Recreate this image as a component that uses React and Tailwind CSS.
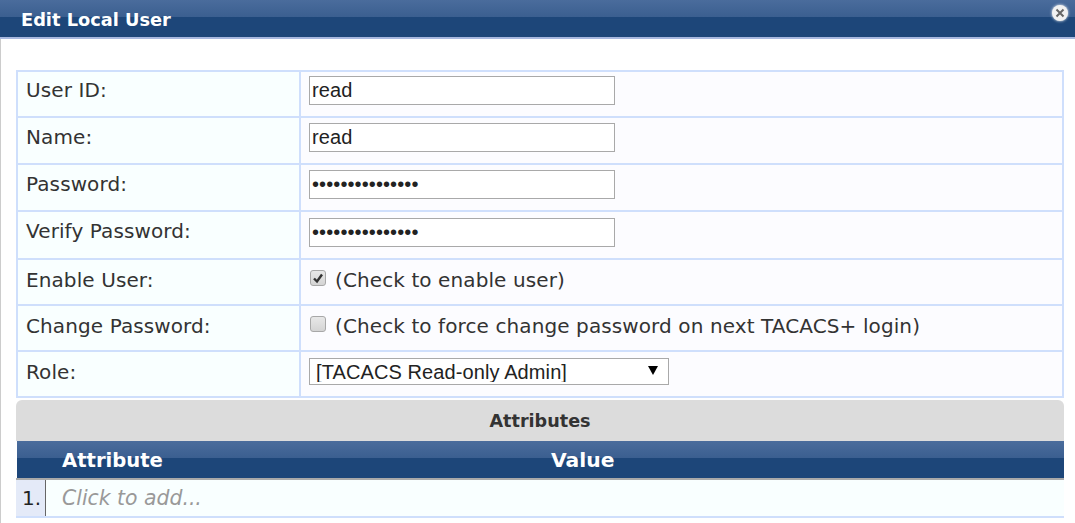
import React from "react";

const FONT = "font-['DejaVu_Sans','Liberation_Sans',sans-serif]";
const BAR = "bg-[linear-gradient(to_bottom,#4a6c9c_0%,#3b5f90_45%,#1d4679_46%,#1d4679_100%)]";
const INPUT = "w-[306px] h-[29px] border border-[#a9a9a9] bg-white pl-[2px] text-[20px] leading-none text-[#222] font-['Liberation_Sans',sans-serif] outline-none";

function CheckBox({ checked }) {
  return (
    <span className="ml-[1px] flex h-[16px] w-[16px] items-center justify-center rounded-[3px] border border-[#a8a8a8] bg-[linear-gradient(to_bottom,#e8e8e8,#d4d4d4)]">
      {checked && (
        <svg viewBox="0 0 12 12" className="h-[12px] w-[12px]">
          <path d="M2 6.5 L5 9.5 L10 2.5" fill="none" stroke="#333" strokeWidth="2.4" />
        </svg>
      )}
    </span>
  );
}

function Row({ label, height, labelPad, pad, children }) {
  return (
    <div className={`flex ${height}`}>
      <div className={`w-[283px] shrink-0 border border-[#cfdffc] bg-[#f9ffff] pl-[8px] ${labelPad} text-[20px] leading-[27px] tracking-[0.1px] text-[#333]`}>
        {label}
      </div>
      <div className={`flex-1 border border-[#cfdffc] bg-[#fcfcff] pl-[8px] ${pad} text-[20px] leading-[27px] tracking-[0.1px] text-[#333]`}>
        {children}
      </div>
    </div>
  );
}

export default function App() {
  return (
    <div className={`h-[523px] w-[1075px] overflow-hidden bg-white ${FONT}`}>
      {/* Title bar */}
      <div className={`relative h-[39px] border-b-2 border-[#a8b8e0] ${BAR} pl-[21px] pt-[7px] text-[17.8px] leading-[26px] font-bold text-white`}>
        Edit Local User
        <div className="absolute right-[7px] top-[5px] flex h-[16px] w-[16px] items-center justify-center rounded-full bg-[#f2f2f2] shadow-[0_0_3px_#fff]">
          <svg viewBox="0 0 10 10" className="h-[10px] w-[10px]">
            <path d="M1.5 1.5 L8.5 8.5 M8.5 1.5 L1.5 8.5" stroke="#666" strokeWidth="2" />
          </svg>
        </div>
      </div>

      <div className="h-[484px] border-l border-[#cccccc] pl-[15px] pr-[11px] pt-[31px]">
        <div className="border border-[#cfdffc]">
          <Row label="User ID:" height="h-[46px]" labelPad="pt-[5px]" pad="pt-[4px]">
            <input className={INPUT} defaultValue="read" />
          </Row>
          <Row label="Name:" height="h-[47px]" labelPad="pt-[6px]" pad="pt-[5px]">
            <input className={INPUT} defaultValue="read" />
          </Row>
          <Row label="Password:" height="h-[47px]" labelPad="pt-[6px]" pad="pt-[5px]">
            <input className={INPUT} type="password" defaultValue="aaaaaaaaaaaaaaa" />
          </Row>
          <Row label="Verify Password:" height="h-[48px]" labelPad="pt-[6px]" pad="pt-[6px]">
            <input className={INPUT} type="password" defaultValue="aaaaaaaaaaaaaaa" />
          </Row>
          <Row label="Enable User:" height="h-[46px]" labelPad="pt-[7px]" pad="pt-[5px]">
            <div className="flex items-start gap-[9px]">
              <div className="pt-[5px]"><CheckBox checked /></div>
              <span className="pt-[2px]">(Check to enable user)</span>
            </div>
          </Row>
          <Row label="Change Password:" height="h-[46px]" labelPad="pt-[7px]" pad="pt-[5px]">
            <div className="flex items-start gap-[9px]">
              <div className="pt-[5px]"><CheckBox /></div>
              <span className="pt-[2px]">(Check to force change password on next TACACS+ login)</span>
            </div>
          </Row>
          <Row label="Role:" height="h-[46px]" labelPad="pt-[7px]" pad="pt-[6px]">
            <div className="relative w-[360px]">
              <select className="h-[27px] w-[360px] appearance-none border border-[#a9a9a9] bg-white pl-[6px] text-[20px] leading-none text-[#222] font-['Liberation_Sans',sans-serif] outline-none" defaultValue="ro">
                <option value="ro">[TACACS Read-only Admin]</option>
              </select>
              <span className="pointer-events-none absolute right-[11px] top-[8px] h-0 w-0 border-x-[5px] border-t-[9px] border-x-transparent border-t-black" />
            </div>
          </Row>
        </div>

        {/* Attributes */}
        <div className="mt-[2px] flex h-[41px] items-center justify-center rounded-t-[6px] bg-[#dcdcdc] pt-[2px] text-[17.6px] font-bold text-[#333]">
          Attributes
        </div>
        <div className={`ml-[1px] flex h-[37px] ${BAR} pt-[6px] text-[20px] leading-[27px] font-bold text-white`}>
          <span className="w-[534px] pl-[45px] text-[19.6px]">Attribute</span>
          <span className="text-[20.3px]">Value</span>
        </div>
        <div className="flex h-[40px] border-t-2 border-b-2 border-t-[#a9a9a9] border-b-[#cfdffc]">
          <div className="w-[30px] shrink-0 border-r border-[#666] bg-[#e4eaf8] pl-[6px] pt-[5px] text-[20px] leading-[27px] text-[#222]">
            1.
          </div>
          <div className="flex-1 bg-[#f9ffff] pl-[16px] pt-[5px] text-[20.4px] leading-[27px] italic text-[#999]">
            Click to add...
          </div>
        </div>
      </div>
    </div>
  );
}
